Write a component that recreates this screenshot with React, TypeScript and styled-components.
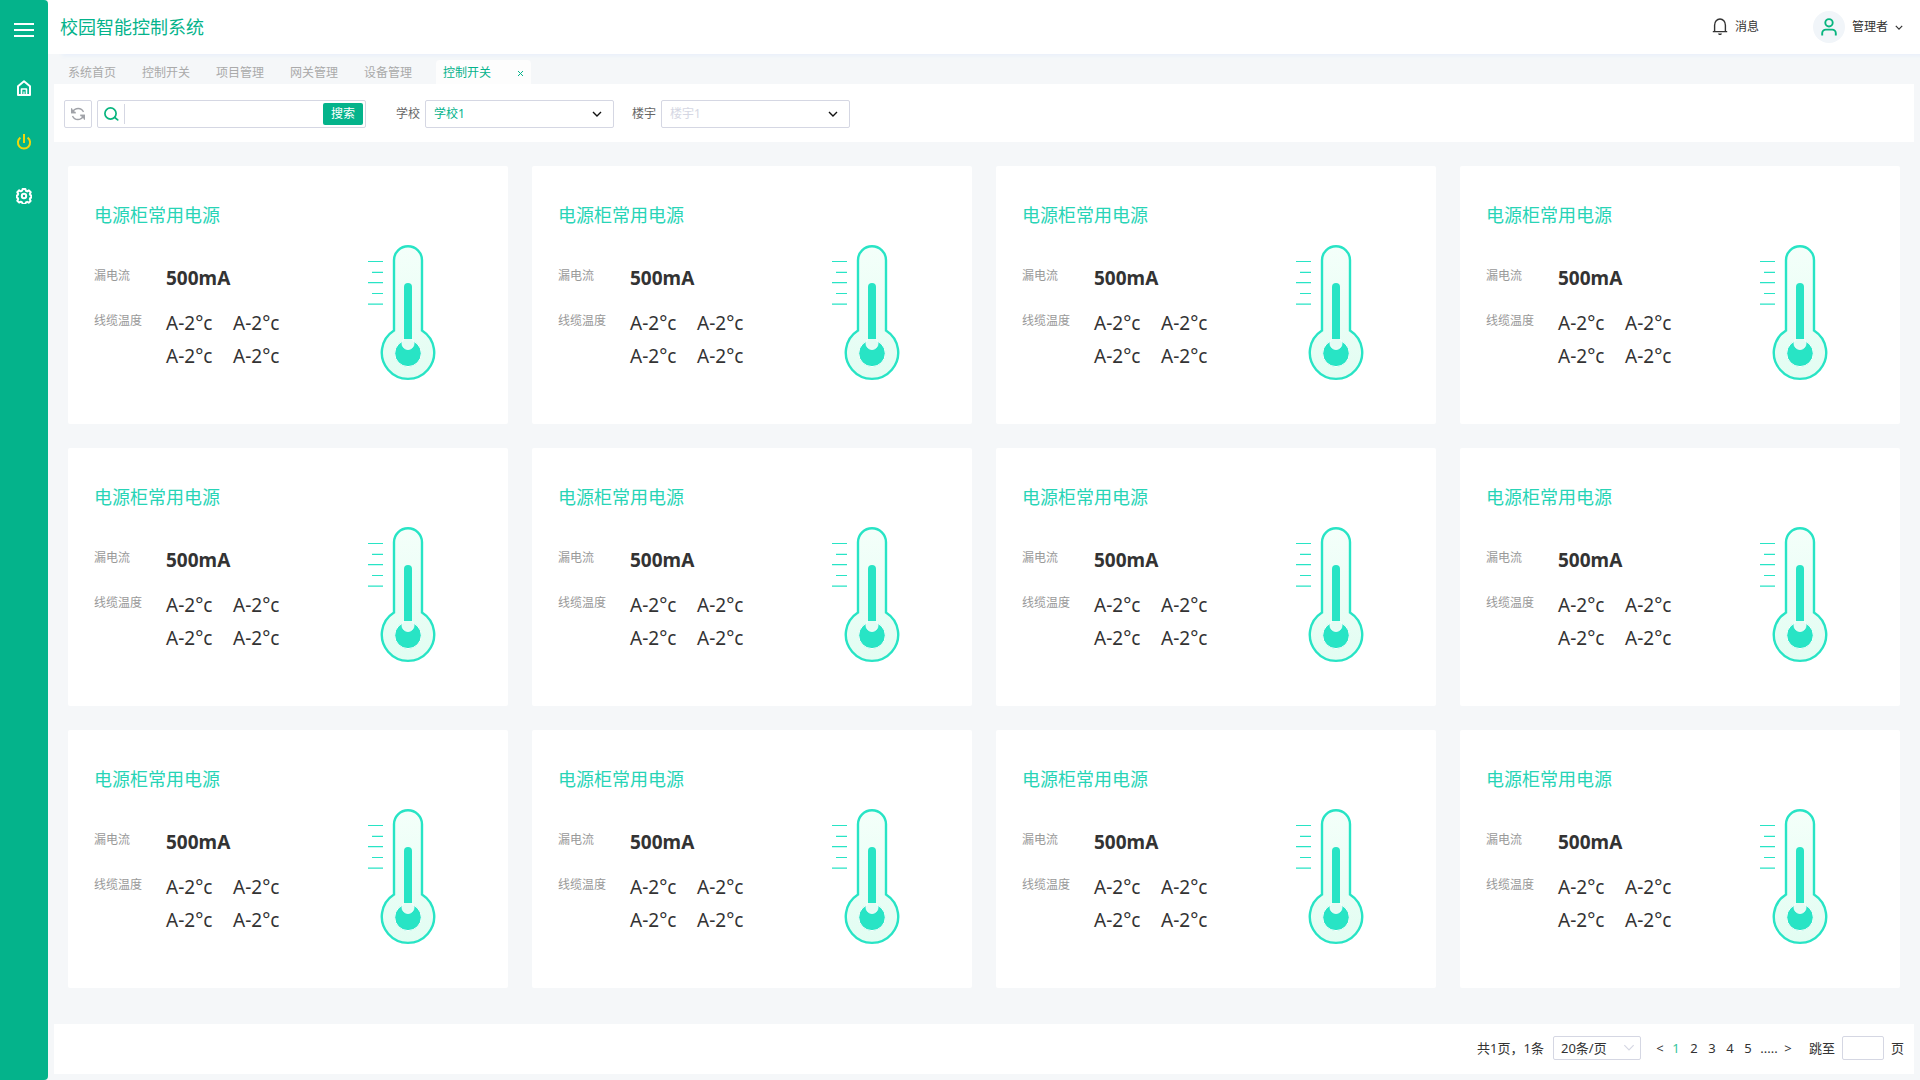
import React from 'react';
import styled, { createGlobalStyle } from 'styled-components';

const GlobalStyle = createGlobalStyle`
  * {
    box-sizing: border-box;
  }

  body {
    margin: 0;
    background: #f5f7f9;
    color: #333333;
    font-family: 'Noto Sans', 'Noto Sans CJK SC', sans-serif;
    font-size: 12px;
    line-height: 18px;
  }

  button,
  input,
  select {
    font: inherit;
    color: inherit;
  }

  button {
    padding: 0;
    border: 0;
    background: none;
    cursor: pointer;
  }
`;

const green = '#04b38b';
const mint = '#28d4b6';
const line = '#d5d7e3';

const Shell = styled.div`
  display: flex;
  min-height: 100vh;
`;

const Sidebar = styled.nav`
  display: flex;
  flex: 0 0 48px;
  flex-direction: column;
  align-items: center;
  gap: 30px;
  padding-top: 18px;
  border-radius: 0 4px 4px 0;
  background: ${green};
`;

const SideButton = styled.button<{ $active?: boolean }>`
  display: grid;
  place-items: center;
  width: 24px;
  height: 24px;
  color: ${(p) => (p.$active ? '#f0d60c' : '#ffffff')};
`;

const SideButtonMenu = styled(SideButton)`
  margin-bottom: 4px;
`;

const Main = styled.div`
  display: flex;
  flex: 1;
  flex-direction: column;
  min-width: 0;
`;

const Header = styled.header`
  display: flex;
  align-items: center;
  justify-content: space-between;
  height: 54px;
  padding: 0 17px 0 12px;
  background: #ffffff;
  box-shadow: 14px 2px 4px #e9f0fa;
`;

const SystemTitle = styled.h1`
  margin: 0;
  color: ${green};
  font-size: 18px;
  font-weight: 400;
  line-height: 26px;
`;

const HeaderActions = styled.div`
  display: flex;
  align-items: center;
  gap: 54px;
`;

const HeaderButton = styled.button`
  display: flex;
  align-items: center;
  gap: 7px;
`;

const Avatar = styled.span`
  display: grid;
  place-items: center;
  width: 32px;
  height: 32px;
  border-radius: 50%;
  background: #f1f5f9;
  color: #08b57f;
`;

const Tabs = styled.div`
  display: flex;
  align-items: flex-end;
  gap: 26px;
  height: 30px;
  padding: 0 20px;
`;

const Tab = styled.button`
  height: 24px;
  padding-top: 2px;
  color: #aaaaaa;
`;

const ActiveTab = styled.div`
  display: flex;
  align-items: center;
  justify-content: space-between;
  width: 95px;
  height: 24px;
  margin-left: -2px;
  padding: 2px 7px 0;
  border-radius: 4px 4px 0 0;
  background: #fdfdfd;
  color: ${green};
`;

const CloseButton = styled.button`
  display: grid;
  place-items: center;
  width: 8px;
  height: 12px;
`;

const Toolbar = styled.section`
  display: flex;
  align-items: center;
  height: 58px;
  margin: 0 6px;
  padding: 2px 10px 0;
  background: #ffffff;
`;

const RefreshButton = styled.button`
  display: grid;
  place-items: center;
  width: 28px;
  height: 28px;
  border: 1px solid ${line};
  border-radius: 2px;
  color: #a0a2a8;
`;

const SearchForm = styled.form`
  display: flex;
  align-items: center;
  gap: 5px;
  width: 269px;
  height: 28px;
  margin-left: 5px;
  padding: 0 2px 0 6px;
  border: 1px solid ${line};
  border-radius: 2px;
  color: #08b57f;
`;

const SearchInput = styled.input`
  flex: 1;
  min-width: 0;
  height: 20px;
  padding: 0 6px;
  border: 0;
  border-left: 1px solid ${line};
  outline: 0;
  color: #333333;
`;

const SearchButton = styled.button`
  width: 40px;
  height: 22px;
  border-radius: 2px;
  background: ${green};
  color: #ffffff;
`;

const Filters = styled.div`
  display: flex;
  gap: 18px;
  margin-left: 30px;
`;

const Filter = styled.label`
  display: flex;
  align-items: center;
  gap: 5px;
  color: #666666;
`;

const SelectBox = styled.span<{ $size: 'regular' | 'small' }>`
  display: grid;
  align-items: center;
  width: ${(p) => (p.$size === 'regular' ? '189px' : '88px')};
  height: ${(p) => (p.$size === 'regular' ? '28px' : '24px')};

  > * {
    grid-area: 1 / 1;
  }

  > svg {
    justify-self: end;
    margin-right: ${(p) => (p.$size === 'regular' ? '12px' : '6px')};
    pointer-events: none;
  }
`;

const Select = styled.select<{ $color: string; $pad: string }>`
  width: 100%;
  height: 100%;
  padding: 0 ${(p) => p.$pad};
  border: 1px solid ${line};
  border-radius: 2px;
  appearance: none;
  background: #ffffff;
  color: ${(p) => p.$color};
`;

const CardGrid = styled.main`
  display: grid;
  grid-template-columns: repeat(4, minmax(0, 1fr));
  gap: 24px;
  padding: 24px 20px 36px;
`;

const Card = styled.article`
  display: flex;
  justify-content: space-between;
  padding: 34px 72px 42px 26px;
  border-radius: 2px;
  background: #ffffff;
`;

const CardTitle = styled.h2`
  margin: 0 0 32px;
  color: ${mint};
  font-size: 18px;
  font-weight: 400;
  line-height: 30px;
`;

const Readings = styled.dl`
  display: grid;
  grid-template-columns: 48px auto;
  column-gap: 24px;
  row-gap: 12px;
  margin: 0;
`;

const ReadingName = styled.dt`
  padding-top: 5px;
  color: #999999;
`;

const Leakage = styled.dd`
  margin: 0;
  font-size: 19px;
  font-weight: 700;
  line-height: 33px;
`;

const Temperatures = styled.dd`
  display: grid;
  grid-template-columns: 47px 47px;
  column-gap: 20px;
  margin: 0;
  font-size: 19px;
  line-height: 33px;
`;

const ThermometerIcon = styled.svg`
  flex: none;
  margin-top: 44px;
`;

const Footer = styled.footer`
  display: flex;
  align-items: center;
  justify-content: flex-end;
  height: 50px;
  margin: auto 6px 6px;
  padding: 0 10px 3px;
  background: #ffffff;
  font-size: 13px;
`;

const PageSize = styled.div`
  display: flex;
  align-items: center;
  gap: 9px;
`;

const Pages = styled.div`
  display: flex;
  align-items: center;
  margin: 0 14px 0 12px;
`;

const PageButton = styled.button<{ $current?: boolean; $narrow?: boolean }>`
  width: ${(p) => (p.$narrow ? '14px' : '18px')};
  color: ${(p) => (p.$current ? '#35c49c' : 'inherit')};
`;

const Ellipsis = styled.span`
  width: 24px;
  text-align: center;
`;

const Jump = styled.label`
  display: flex;
  align-items: center;
  gap: 7px;
`;

const JumpInput = styled.input`
  width: 42px;
  height: 24px;
  padding: 0 4px;
  border: 1px solid ${line};
  border-radius: 2px;
`;

const Chevron = ({ color, width, height, stroke }: { color: string; width: number; height: number; stroke: number }) => (
  <svg width={width} height={height} viewBox="0 0 10 6" fill="none" stroke={color} strokeWidth={stroke} aria-hidden="true">
    <path d="M1 1l4 4 4-4" />
  </svg>
);

const Thermometer = () => (
  <ThermometerIcon width="70" height="138" viewBox="0 0 70 138" fill="none" aria-hidden="true">
    <defs>
      <linearGradient id="glass" x1="0" y1="0" x2="0" y2="1">
        <stop offset="0" stopColor="#f4fffa" />
        <stop offset="1" stopColor="#e2fdf2" />
      </linearGradient>
    </defs>
    <path
      d="M28 86.500V16.200a14 14 0 0 1 28 0v70.300a26.200 26.200 0 1 1-28 0z"
      fill="url(#glass)"
      stroke="#28e4c5"
      strokeWidth="2.400"
    />
    <circle cx="42" cy="109.300" r="13.300" fill="#28e4c5" stroke="#f8fffc" strokeWidth="1" />
    <circle cx="42" cy="99.500" r="6" fill="#e5fcf4" stroke="#ffffff" strokeWidth="0.8" />
    <path d="M38 95V43a4 4 0 0 1 8 0v52z" fill="#28e4c5" />
    <path d="M2 17.500h15M6 28.300h11M2 38.700h15M6 49.500h11M2 60.200h15" stroke="#28e4c5" strokeWidth="1.200" />
  </ThermometerIcon>
);

const MenuIcon = () => (
  <svg width="20" height="14" viewBox="0 0 20 14" fill="currentColor" aria-hidden="true">
    <path d="M0 0h20v2H0zM0 6h20v2H0zM0 12h20v2H0z" />
  </svg>
);

const HomeIcon = () => (
  <svg width="14" height="16" viewBox="0 0 14 16" fill="none" stroke="currentColor" strokeWidth="2" strokeLinejoin="round" aria-hidden="true">
    <path d="M1 6.200L7 1.200l6 5v8.700H1z" />
    <path d="M4.500 15V9h5v6" strokeWidth="1.600" />
    <path d="M7 11.500V15" strokeWidth="1.200" />
  </svg>
);

const PowerIcon = () => (
  <svg width="16" height="16" viewBox="0 0 16 16" fill="none" stroke="currentColor" strokeWidth="2" aria-hidden="true">
    <path d="M8 0v9M4.400 3.600a6.100 6.100 0 1 0 7.200 0" />
  </svg>
);

const GearIcon = () => (
  <svg width="16" height="16" viewBox="0 0 16 16" fill="none" stroke="currentColor" strokeWidth="2" strokeLinejoin="round" aria-hidden="true">
    <path d="M6.600 1h2.800l.5 1.800 1.300.6 1.700-1 1.800 1.900-.9 1.600.5 1.200 1 .4v2l-1 .5-.5 1.200.8 1.700-1.900 1.800-1.600-.9-1.200.5-.5 1.700H6.600l-.5-1.700-1.300-.6-1.600.9-1.900-1.800.9-1.700-.5-1.200-.9-.4v-2l.9-.4.5-1.300-.9-1.600 1.900-1.900 1.600 1 1.300-.6z" />
    <circle cx="8" cy="8" r="2.200" />
  </svg>
);

const BellIcon = () => (
  <svg width="16" height="18" viewBox="0 0 16 18" fill="none" stroke="#333333" strokeWidth="1.400" strokeLinejoin="round" aria-hidden="true">
    <path d="M.8 13.600h14.400M2.600 13.600V7.200C2.600 3.600 5 1 8 1s5.400 2.600 5.400 6.200v6.400" />
    <path d="M6 15.500h4c-.3 1-1 1.600-2 1.600s-1.700-.6-2-1.600z" fill="#333333" stroke="none" />
  </svg>
);

const UserIcon = () => (
  <svg width="16" height="18" viewBox="0 0 16 18" fill="none" stroke="currentColor" strokeWidth="1.900" aria-hidden="true">
    <circle cx="8" cy="4.800" r="3.700" />
    <path d="M1.200 17.500v-2.300a3.600 3.600 0 0 1 3.600-3.600h6.400a3.600 3.600 0 0 1 3.600 3.600v2.300" />
  </svg>
);

const RefreshIcon = () => (
  <svg width="14" height="14" viewBox="0 0 14 14" fill="none" stroke="currentColor" strokeWidth="1.300" aria-hidden="true">
    <path d="M1.500 4.900C3 2.400 5 1.500 7.200 1.500c2.500 0 4.300 1.300 5.300 3.500M12.500 9.100c-1.500 2.500-3.500 3.400-5.700 3.400-2.500 0-4.300-1.300-5.300-3.500" />
    <path d="M.6 1.500v4h4M13.400 12.500v-4h-4" />
    <path d="M.6 2.500v3h3zM13.400 11.500v-3h-3z" fill="currentColor" />
  </svg>
);

const SearchIcon = () => (
  <svg width="15" height="14" viewBox="0 0 15 14" fill="none" stroke="currentColor" strokeWidth="1.700" strokeLinecap="round" aria-hidden="true">
    <circle cx="6.500" cy="6.500" r="5.600" />
    <path d="M10.800 10.500l2.900 2.400" />
  </svg>
);

const tabs = ['系统首页', '控制开关', '项目管理', '网关管理', '设备管理'];
const cabinets = Array.from({ length: 12 }, (_, id) => ({
  id,
  name: '电源柜常用电源',
  leakage: '500mA',
  temperatures: ['A-2°c', 'A-2°c', 'A-2°c', 'A-2°c'],
}));

export default function App() {
  return (
    <>
      <GlobalStyle />
      <Shell>
        <Sidebar>
          <SideButtonMenu type="button" aria-label="菜单"><MenuIcon /></SideButtonMenu>
          <SideButton type="button" aria-label="首页"><HomeIcon /></SideButton>
          <SideButton type="button" aria-label="开关" $active><PowerIcon /></SideButton>
          <SideButton type="button" aria-label="设置"><GearIcon /></SideButton>
        </Sidebar>
        <Main>
          <Header>
            <SystemTitle>校园智能控制系统</SystemTitle>
            <HeaderActions>
              <HeaderButton type="button"><BellIcon />消息</HeaderButton>
              <HeaderButton type="button">
                <Avatar><UserIcon /></Avatar>
                管理者
                <Chevron color="#333333" width={8} height={5} stroke={1.5} />
              </HeaderButton>
            </HeaderActions>
          </Header>
          <Tabs>
            {tabs.map((tab) => (
              <Tab type="button" key={tab}>{tab}</Tab>
            ))}
            <ActiveTab>
              控制开关
              <CloseButton type="button" aria-label="关闭">
                <svg width="5" height="5" viewBox="0 0 5 5" stroke="currentColor" aria-hidden="true">
                  <path d="M0 0l5 5M5 0L0 5" />
                </svg>
              </CloseButton>
            </ActiveTab>
          </Tabs>
          <Toolbar>
            <RefreshButton type="button" aria-label="刷新"><RefreshIcon /></RefreshButton>
            <SearchForm onSubmit={(e) => e.preventDefault()}>
              <SearchIcon />
              <SearchInput type="text" aria-label="搜索" />
              <SearchButton type="submit">搜索</SearchButton>
            </SearchForm>
            <Filters>
              <Filter>
                学校
                <SelectBox $size="regular">
                  <Select $color={green} $pad="8px"><option>学校1</option></Select>
                  <Chevron color="#111111" width={10} height={6} stroke={1.4} />
                </SelectBox>
              </Filter>
              <Filter>
                楼宇
                <SelectBox $size="regular">
                  <Select $color={line} $pad="8px"><option>楼宇1</option></Select>
                  <Chevron color="#111111" width={10} height={6} stroke={1.4} />
                </SelectBox>
              </Filter>
            </Filters>
          </Toolbar>
          <CardGrid>
            {cabinets.map((cabinet) => (
              <Card key={cabinet.id}>
                <div>
                  <CardTitle>{cabinet.name}</CardTitle>
                  <Readings>
                    <ReadingName>漏电流</ReadingName>
                    <Leakage>{cabinet.leakage}</Leakage>
                    <ReadingName>线缆温度</ReadingName>
                    <Temperatures>
                      {cabinet.temperatures.map((value, i) => <span key={i}>{value}</span>)}
                    </Temperatures>
                  </Readings>
                </div>
                <Thermometer />
              </Card>
            ))}
          </CardGrid>
          <Footer>
            <PageSize>
              <span>共1页，1条</span>
              <SelectBox $size="small">
                <Select $color="#333333" $pad="7px" aria-label="每页条数"><option>20条/页</option></Select>
                <Chevron color={line} width={12} height={7} stroke={1} />
              </SelectBox>
            </PageSize>
            <Pages>
              <PageButton type="button" $narrow>&lt;</PageButton>
              {[1, 2, 3, 4, 5].map((n) => (
                <PageButton type="button" key={n} $current={n === 1}>{n}</PageButton>
              ))}
              <Ellipsis>.....</Ellipsis>
              <PageButton type="button" $narrow>&gt;</PageButton>
            </Pages>
            <Jump>
              跳至
              <JumpInput type="text" aria-label="页码" />
              页
            </Jump>
          </Footer>
        </Main>
      </Shell>
    </>
  );
}
